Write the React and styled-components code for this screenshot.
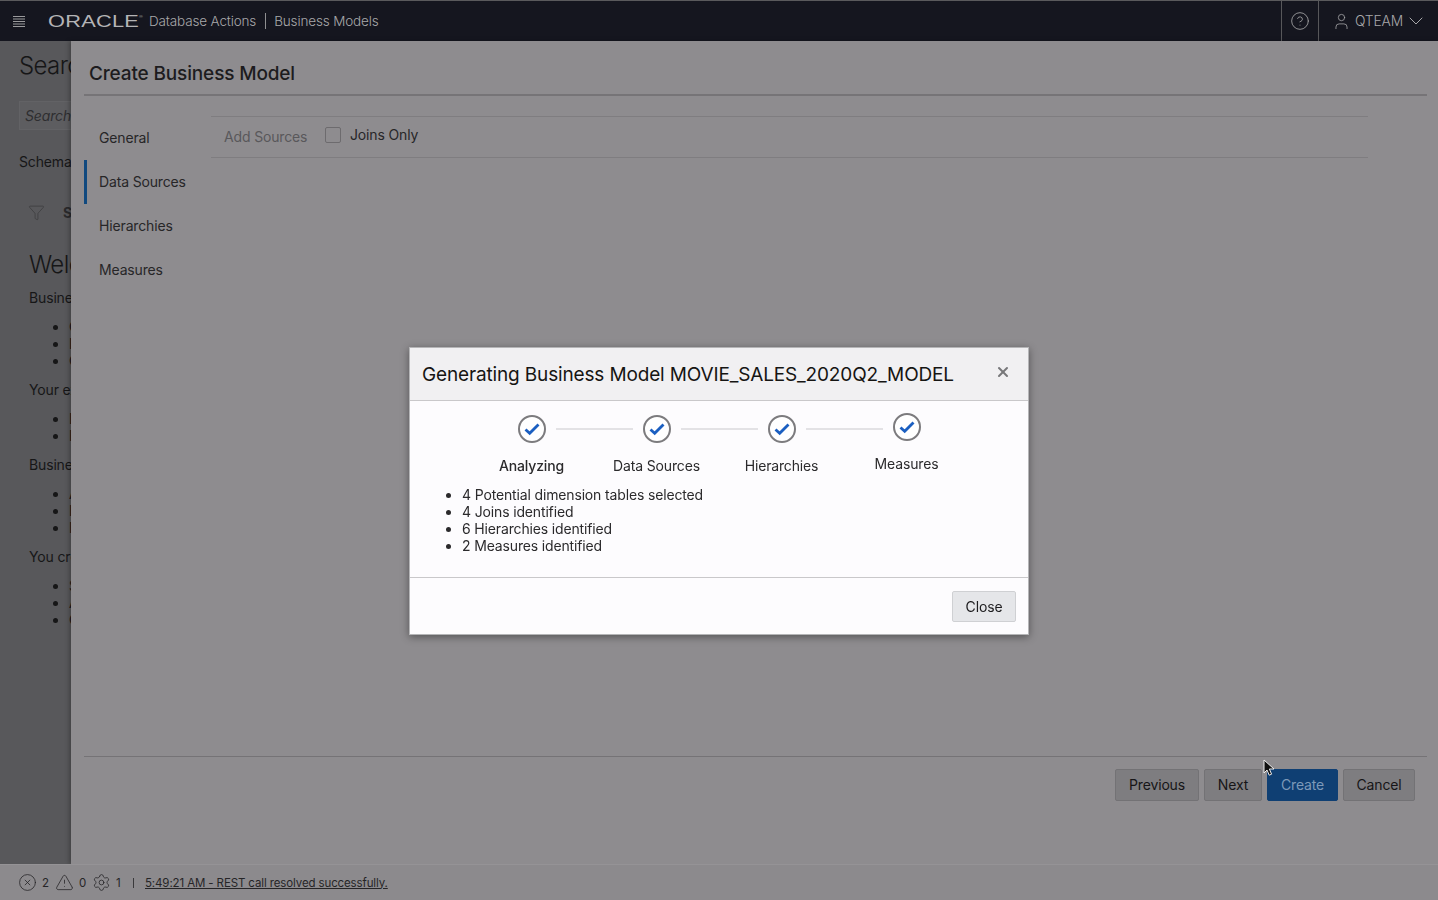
import React from 'react'
import styled, { createGlobalStyle } from 'styled-components';
import { CircleX, TriangleAlert, Settings, CircleHelp, User, ChevronDown, Filter, X } from 'lucide-react';

const GlobalStyle = createGlobalStyle`
    html, body {
        margin: 0;
        padding: 0;
        height: 100%;
        overflow: hidden;
    }
    body {
        font-family: Inter, "Liberation Sans", sans-serif;
        font-size: 14px;
        letter-spacing: -0.15px;
        color: #1d1c1e;
        background: #58585b;
    }
    * { box-sizing: border-box; }
`;

const steps = [
    { label: 'Analyzing', active: true },
    { label: 'Data Sources' },
    { label: 'Hierarchies' },
    { label: 'Measures', raised: true },
];

const results = [
    '4 Potential dimension tables selected',
    '4 Joins identified',
    '6 Hierarchies identified',
    '2 Measures identified',
];

const welcome = [
    { text: 'Business Models describe your data', items: ['Create a semantic layer', 'Identify facts and dimensions', 'Organize your analytic views'] },
    { text: 'Your existing tables can be used', items: ['Dimension tables', 'Fact tables'] },
    { text: 'Business Models contain', items: ['Attribute dimensions', 'Hierarchies', 'Measures'] },
    { text: 'You create a model from', items: ['Source tables', 'Automatic analysis', 'Column mappings'] },
];

const navItems = ['General', 'Data Sources', 'Hierarchies', 'Measures'];

const App = () => {
    return <Page>
        <GlobalStyle />
        <TopBar>
            <Hamburger viewBox="0 0 12 11" aria-hidden="true">
                <path d="M0 .5h12M0 3h12M0 5.5h12M0 8h12M0 10.5h12" stroke="#9a9a9c" strokeWidth="1" />
            </Hamburger>
            <OracleLogo>ORACLE<LogoMark>®</LogoMark></OracleLogo>
            <BarTitle>Database Actions</BarTitle>
            <BarSeparator />
            <BarTitle>Business Models</BarTitle>
            <BarRight>
                <HelpCell>
                    <CircleHelp size={20} strokeWidth={1} color="#a8a8aa" />
                </HelpCell>
                <UserCell>
                    <User size={19} strokeWidth={1} color="#a8a8aa" />
                    <span>QTEAM</span>
                    <ChevronDown size={24} strokeWidth={1} color="#a8a8aa" />
                </UserCell>
            </BarRight>
        </TopBar>
        <Main>
            <BackPage>
                <BackHeading>Search</BackHeading>
                <BackSearch>Search</BackSearch>
                <BackLabel>Schema</BackLabel>
                <BackFilter>
                    <Filter size={17} strokeWidth={1} color="#3a3a3c" />
                    <strong>Show</strong>
                </BackFilter>
                <BackHeading $indented>Welcome</BackHeading>
                <BackCopy>
                    {welcome.map((block) => <React.Fragment key={block.text}>
                        <p>{block.text}</p>
                        <ul>
                            {block.items.map((item) => <li key={item}>{item}</li>)}
                        </ul>
                    </React.Fragment>)}
                </BackCopy>
            </BackPage>
            <Drawer>
                <DrawerTitle>Create Business Model</DrawerTitle>
                <DrawerBody>
                    <SideNav>
                        {navItems.map((item) => <NavItem key={item} $active={item === 'Data Sources'}>{item}</NavItem>)}
                    </SideNav>
                    <Content>
                        <SourceBar>
                            <AddSources>Add Sources</AddSources>
                            <CheckBox />
                            <CheckLabel>Joins Only</CheckLabel>
                        </SourceBar>
                    </Content>
                </DrawerBody>
                <DrawerFooter>
                    <DimButton $width={84}>Previous</DimButton>
                    <DimButton $width={58}>Next</DimButton>
                    <PrimaryButton $width={71}>Create</PrimaryButton>
                    <DimButton $width={72}>Cancel</DimButton>
                </DrawerFooter>
            </Drawer>
        </Main>
        <StatusBar>
            <CircleX size={19} strokeWidth={1} color="#262527" />
            <StatusCount>2</StatusCount>
            <TriangleAlert size={19} strokeWidth={1} color="#262527" />
            <StatusCount>0</StatusCount>
            <Settings size={19} strokeWidth={1} color="#262527" />
            <StatusCount>1</StatusCount>
            <StatusPipe />
            <StatusLink>5:49:21 AM - REST call resolved successfully.</StatusLink>
        </StatusBar>

        <Overlay>
            <Modal>
                <ModalHeader>
                    <ModalTitle>Generating Business Model MOVIE_SALES_2020Q2_MODEL</ModalTitle>
                    <ModalClose><X size={16} strokeWidth={3} color="#77777a" /></ModalClose>
                </ModalHeader>
                <ModalBody>
                    <Stepper>
                        {steps.map((step, i) => <Step key={step.label} $raised={step.raised} $last={i === steps.length - 1}>
                            <StepCircle>
                                <svg width="16" height="14" viewBox="0 0 16 14" aria-hidden="true">
                                    <path d="M1.5 7.5l4.2 3.8L14.5 2.5" fill="none" stroke="#1b5fc1" strokeWidth="2.8" />
                                </svg>
                            </StepCircle>
                            <StepLabel $active={step.active}>{step.label}</StepLabel>
                        </Step>)}
                    </Stepper>
                    <ResultList>
                        {results.map((line) => <li key={line}>{line}</li>)}
                    </ResultList>
                </ModalBody>
                <ModalFooter>
                    <CloseButton>Close</CloseButton>
                </ModalFooter>
            </Modal>
        </Overlay>

        <Cursor viewBox="0 0 12 18" aria-hidden="true">
            <path d="M1 1v13l3-3 2.2 5.2 2.4-1L6.4 10H11z" fill="#111" stroke="#eee" strokeWidth="1" />
        </Cursor>
    </Page>
};

export default App;

const Page = styled.div`
    height: 100vh;
    display: flex;
    flex-direction: column;
    overflow: hidden;
`;

const TopBar = styled.header`
    height: 41px;
    flex: none;
    display: flex;
    align-items: center;
    padding-left: 13px;
    background: #15161f;
    border-top: 1px solid #5a5a5c;
    color: #a8a8aa;
`;

const Hamburger = styled.svg`
    width: 12px;
    height: 11px;
    flex: none;
`;

const OracleLogo = styled.span`
    margin: 1px 0 0 23px;
    width: 101px;
    flex: none;
    font-family: "Liberation Sans", sans-serif;
    font-size: 17px;
    font-weight: 400;
    letter-spacing: 0.2px;
    color: #b4b4b6;
    transform: scaleX(1.28);
    transform-origin: left center;
    white-space: nowrap;
`;

const LogoMark = styled.sup`
    font-size: 4px;
    vertical-align: 9px;
    line-height: 0;
`;

const BarTitle = styled.span`
    font-size: 13.5px;
    font-weight: 300;
`;

const BarSeparator = styled.span`
    width: 1px;
    height: 16px;
    margin: 0 8px 0 9px;
    background: #8f8f91;
`;

const BarRight = styled.div`
    margin-left: auto;
    height: 100%;
    display: flex;
`;

const HelpCell = styled.div`
    width: 37px;
    display: flex;
    align-items: center;
    justify-content: center;
    border-left: 1px solid #57575a;
`;

const UserCell = styled.div`
    width: 120px;
    display: flex;
    align-items: center;
    padding-left: 13px;
    gap: 4px;
    border-left: 1px solid #57575a;
    font-size: 13.8px;
    font-weight: 300;
    svg:last-child { margin-left: -3px; }
`;

const Main = styled.div`
    flex: 1;
    position: relative;
    min-height: 0;
`;

const BackPage = styled.div`
    height: 100%;
    display: flex;
    flex-direction: column;
    align-items: flex-start;
    padding: 10px 0 0 19px;
    background: #58585b;
    color: #161617;
`;

const BackHeading = styled.h2`
    margin: ${(props) => (props.$indented ? '28px 0 0 10px' : '0')};
    font-size: 24px;
    font-weight: 300;
    line-height: 30px;
    letter-spacing: -0.6px;
`;

const BackSearch = styled.div`
    margin-top: 20px;
    width: 160px;
    height: 29px;
    padding-left: 5px;
    display: flex;
    align-items: center;
    font-style: italic;
    color: #2e2e30;
    background: #5d5d60;
    border: 1px solid #626265;
`;

const BackLabel = styled.div`
    margin-top: 23px;
    line-height: 17px;
`;

const BackFilter = styled.div`
    margin: 32px 0 0 9px;
    display: flex;
    align-items: center;
    gap: 18px;
    height: 20px;
    strong { font-weight: 700; color: #2a2a2c; }
`;

const BackCopy = styled.div`
    margin-left: 10px;
    margin-top: 9px;
    width: 300px;
    line-height: 17px;
    p { margin: 0 0 12px; }
    ul { margin: 0 0 12px; padding-left: 40px; }
`;

const Drawer = styled.section`
    position: absolute;
    top: 0;
    bottom: 0;
    left: 71px;
    right: 0;
    display: flex;
    flex-direction: column;
    padding: 0 11px 0 13px;
    background: #8e8c8f;
    box-shadow: -2px 0 4px rgba(0, 0, 0, 0.25);
`;

const DrawerTitle = styled.h1`
    margin: 0;
    height: 55px;
    flex: none;
    padding: 20px 0 0 5px;
    font-size: 19px;
    font-weight: 500;
    line-height: 26px;
    color: #1d1c1e;
    border-bottom: 2px solid #767477;
`;

const DrawerBody = styled.div`
    flex: 1;
    display: flex;
    min-height: 0;
`;

const SideNav = styled.nav`
    width: 127px;
    flex: none;
    padding-top: 20px;
`;

const NavItem = styled.div`
    height: 44px;
    display: flex;
    align-items: center;
    padding-left: ${(props) => (props.$active ? '12px' : '15px')};
    padding-bottom: 2px;
    border-left: ${(props) => (props.$active ? '3px solid #10497f' : 'none')};
    color: #272628;
`;

const Content = styled.div`
    width: 1157px;
    flex: none;
    padding-top: 20px;
`;

const SourceBar = styled.div`
    height: 42px;
    display: flex;
    align-items: center;
    padding-left: 13px;
    border-top: 1px solid #7f7d80;
    border-bottom: 1px solid #7f7d80;
`;

const AddSources = styled.span`
    margin-top: -2px;
    width: 101px;
    flex: none;
    color: #59585b;
`;

const CheckBox = styled.span`
    width: 16px;
    height: 16px;
    margin-top: -4px;
    flex: none;
    border: 1px solid #6d6b6e;
    border-radius: 2px;
`;

const CheckLabel = styled.span`
    margin: -6px 0 0 9px;
    color: #272628;
`;

const DrawerFooter = styled.footer`
    height: 108px;
    flex: none;
    display: flex;
    justify-content: flex-end;
    align-items: flex-start;
    gap: 5px;
    padding: 12px 12px 0 0;
    border-top: 1px solid #757376;
`;

const DimButton = styled.button`
    width: ${(props) => props.$width}px;
    height: 32px;
    padding: 0 0 2px;
    font: inherit;
    letter-spacing: inherit;
    color: #161517;
    background: #7e7d80;
    border: 1px solid #737275;
    border-radius: 2px;
`;

const PrimaryButton = styled(DimButton)`
    color: #7d99b8;
    background: #0f3f73;
    border-color: #0f3f73;
`;

const StatusBar = styled.footer`
    height: 36px;
    flex: none;
    display: flex;
    align-items: center;
    padding-left: 18px;
    background: #8c8a8d;
    border-top: 1px solid #959396;
    font-size: 11.5px;
    letter-spacing: -0.12px;
    color: #262527;
    position: relative;
`;

const StatusCount = styled.span`
    width: 18px;
    padding-left: 5px;
    flex: none;
`;

const StatusPipe = styled.span`
    width: 1px;
    height: 10px;
    margin: 0 11px 0 4px;
    flex: none;
    background: #3a393b;
`;

const StatusLink = styled.a`
    text-decoration: underline;
    white-space: nowrap;
`;

const Overlay = styled.div`
    position: fixed;
    inset: 0;
    display: flex;
    justify-content: center;
    align-items: flex-start;
    padding-top: 347px;
`;

const Modal = styled.div`
    width: 620px;
    height: 288px;
    display: flex;
    flex-direction: column;
    background: #fdfcfe;
    border: 1px solid #b5b5b7;
    box-shadow: 0 2px 8px rgba(0, 0, 0, 0.4);
`;

const ModalHeader = styled.div`
    height: 53px;
    flex: none;
    display: flex;
    align-items: flex-start;
    justify-content: space-between;
    padding: 14px 17px 0 12px;
    background: #f1f0f2;
    border-bottom: 1px solid #c9c8ca;
`;

const ModalTitle = styled.h3`
    margin: 0;
    font-size: 19px;
    font-weight: 400;
    line-height: 26px;
    color: #161513;
    white-space: nowrap;
`;

const ModalClose = styled.span`
    display: flex;
    margin-top: 2px;
`;

const ModalBody = styled.div`
    flex: 1;
    padding: 14px 0 0 0;
`;

const Stepper = styled.div`
    display: flex;
    padding-left: 59px;
`;

const Step = styled.div`
    width: 125px;
    display: flex;
    flex-direction: column;
    align-items: center;
    position: relative;
    margin-top: ${(props) => (props.$raised ? '-2px' : '0')};
    &::after {
        content: "";
        display: ${(props) => (props.$last ? 'none' : 'block')};
        position: absolute;
        top: 13px;
        left: 87px;
        width: 77px;
        height: 2px;
        background: #e3e2e5;
    }
`;

const StepCircle = styled.div`
    width: 28px;
    height: 28px;
    display: flex;
    align-items: center;
    justify-content: center;
    background: #fff;
    border: 2px solid #7c7b7e;
    border-radius: 50%;
`;

const StepLabel = styled.div`
    margin-top: 14px;
    line-height: 17px;
    font-weight: ${(props) => (props.$active ? 500 : 400)};
    color: #2b2a2c;
`;

const ResultList = styled.ul`
    margin: 12px 0 0;
    padding-left: 52px;
    line-height: 17px;
    color: #2b2a2c;
`;

const ModalFooter = styled.div`
    height: 57px;
    flex: none;
    display: flex;
    justify-content: flex-end;
    padding: 13px 12px 0 0;
    border-top: 1px solid #c9c8ca;
`;

const CloseButton = styled.button`
    width: 64px;
    height: 31px;
    font: inherit;
    letter-spacing: inherit;
    color: #1d1c1e;
    background: #e5e6e9;
    border: 1px solid #cfd0d3;
    border-radius: 2px;
`;

const Cursor = styled.svg`
    position: fixed;
    left: 1263px;
    top: 759px;
    width: 12px;
    height: 18px;
`;
